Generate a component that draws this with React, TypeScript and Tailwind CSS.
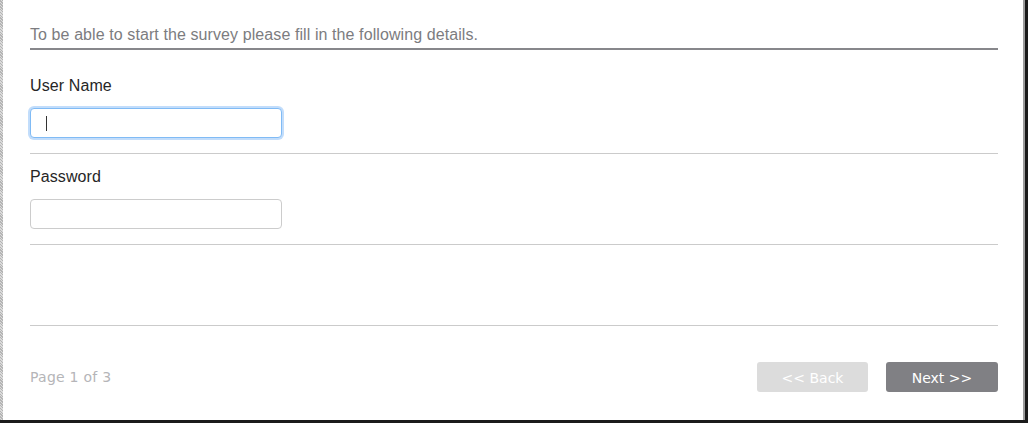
const sans = { fontFamily: '"Liberation Sans", Arial, sans-serif' }

function Field({ label, focused }: { label: string; focused?: boolean }) {
  return (
    <div className="border-b border-[#cbcbcb] pb-[15px] pt-[14px]">
      <div className="text-[16px] leading-[18px] tracking-[0.1px] text-[#262626]">{label}</div>
      <div
        className={
          focused
            ? 'mt-[13px] flex h-[30px] w-[252px] items-center rounded-[4px] border border-[#80bbf5] bg-white pl-[15px] shadow-[0_0_0_2px_#c2ddfb]'
            : 'mt-[13px] h-[30px] w-[252px] rounded-[4px] border border-[#cccccc] bg-white'
        }
      >
        {focused && <span className="h-[15px] w-px bg-[#333]" />}
      </div>
    </div>
  )
}

export default function App() {
  return (
    <div className="flex h-[423px] w-[1028px] flex-col bg-[#1b1b1b]" style={sans}>
      <div className="flex h-[420px]">
        <div className="w-[3px] bg-[repeating-linear-gradient(45deg,#b4b4b4_0px,#b4b4b4_1px,#dadada_1px,#dadada_2px)]" />
        <div className="flex flex-1 flex-col bg-white pl-[27px] pr-[25px]">
          <div className="border-b-2 border-[#87878b] pb-[4px] pt-[26px] text-[16px] leading-[18px] tracking-[0.09px] text-[#7c7c80]">
            To be able to start the survey please fill in the following details.
          </div>
          <div className="mt-[13px]">
            <Field label="User Name" focused />
          </div>
          <Field label="Password" />
          <div className="h-[81px] border-b border-[#cbcbcb]" />
          <div
            className="flex items-center pt-[36px] text-[14px] leading-[17px]"
            style={{ fontFamily: '"DejaVu Sans", Verdana, sans-serif' }}
          >
            <span className="tracking-[0.25px] text-[#b5b5b8]">Page 1 of 3</span>
            <div className="ml-auto flex gap-[18px]">
              <button className="h-[30px] w-[111px] rounded-[3px] bg-[#dcdcdc] pt-[2px] text-white">&lt;&lt; Back</button>
              <button className="h-[30px] w-[112px] rounded-[3px] bg-[#808084] pt-[2px] text-white">Next &gt;&gt;</button>
            </div>
          </div>
        </div>
        <div className="w-[2px] bg-[#9c9c9c]" />
        <div className="w-[3px]" />
      </div>
    </div>
  )
}
